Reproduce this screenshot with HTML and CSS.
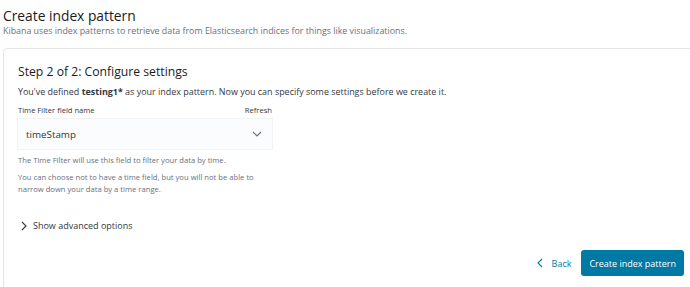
FILE: index.html
```html
<!DOCTYPE html>
<html lang="en">
	<head>
		<meta charset="UTF-8" />
		<title>Create index pattern</title>
		<link rel="stylesheet" href="styles.css">
	</head>
	<body>
		<div class="page-header">
			<h1>Create index pattern</h1>
			<p>
				Kibana uses index patterns to retrieve data from
				Elasticsearch indices for things like visualizations.
			</p>
		</div>

		<div class="panel">
			<h2>Step 2 of 2: Configure settings</h2>
			<p class="intro">
				You've defined <strong>testing1*</strong> as your index
				pattern. Now you can specify some settings before we
				create it.
			</p>

			<div class="form-row">
				<div class="label-row">
					<span>Time Filter field name</span>
					<a class="refresh">Refresh</a>
				</div>
				<div class="select">
					<span>timeStamp</span>
					<svg width="10" height="6" viewBox="0 0 10 6">
						<path d="M1 1l4 4 4-4" fill="none" stroke="#69707d" stroke-width="1.1" />
					</svg>
				</div>
				<div class="help">
					<p>The Time Filter will use this field to filter your data by time.</p>
					<p>
						You can choose not to have a time field, but you will not be able to
						narrow down your data by a time range.
					</p>
				</div>
			</div>

			<div class="advanced">
				<svg width="6" height="10" viewBox="0 0 6 10">
					<path d="M1 1l4 4-4 4" fill="none" stroke="#343741" stroke-width="1.1" />
				</svg>
				<span>Show advanced options</span>
			</div>

			<div class="actions">
				<a class="back">
					<svg width="6" height="10" viewBox="0 0 6 10">
						<path d="M5 1L1 5l4 4" fill="none" stroke="#0079a5" stroke-width="1.1" />
					</svg>
					Back
				</a>
				<button class="create-btn">Create index pattern</button>
			</div>
		</div>
	</body>
</html>
```

FILE: styles.css
```css
* {
	margin: 0;
	padding: 0;
	box-sizing: border-box;
}

body {
	font-family: 'Open Sans', sans-serif;
	background: #fff;
	color: #343741;
	padding: 7px 0 0 3px;
	overflow: hidden;
}

.page-header h1 {
	font-size: 13.8px;
	font-weight: 400;
	line-height: 18px;
	color: #1a1c21;
}

.page-header p {
	font-size: 8.85px;
	line-height: 12px;
	color: #69707d;
}

.panel {
	margin-top: 11px;
	width: 720px;
	height: 260px;
	border: 1px solid #e3e6eb;
	border-radius: 4px;
	padding: 14px 14px;
	box-shadow: 0 1px 2px rgba(0, 0, 0, 0.04);
}

.panel h2 {
	font-size: 12.2px;
	font-weight: 400;
	line-height: 17px;
	color: #1a1c21;
}

.intro {
	margin-top: 5px;
	font-size: 8.95px;
	line-height: 14px;
	color: #343741;
}

.intro strong {
	font-weight: 700;
}

.form-row {
	width: 254px;
	margin-top: 5px;
}

.label-row {
	display: flex;
	justify-content: space-between;
	font-size: 7.6px;
	line-height: 12px;
	color: #343741;
}

.refresh {
	color: #343741;
}

.select {
	margin-top: 3px;
	height: 30px;
	background: #fbfcfd;
	box-shadow: 0 0 0 1px rgba(52, 55, 65, 0.06);
	display: flex;
	align-items: center;
	justify-content: space-between;
	padding: 0 10px 0 8px;
	font-size: 9.8px;
	color: #343741;
}

.help {
	margin-top: 5px;
	font-size: 7.65px;
	line-height: 12px;
	color: #69707d;
}

.help p + p {
	margin-top: 5px;
}

.advanced {
	margin-top: 24px;
	display: flex;
	align-items: center;
	gap: 6px;
	padding-left: 3px;
	font-size: 9px;
	color: #343741;
}

.actions {
	width: 666px;
	margin-top: 18px;
	display: flex;
	justify-content: flex-end;
	align-items: center;
	gap: 0;
}

.back {
	display: flex;
	align-items: center;
	gap: 9px;
	padding: 0 10px;
	font-size: 9px;
	color: #0079a5;
}

.create-btn {
	height: 26px;
	padding: 0 8px;
	background: #0079a5;
	border: none;
	border-radius: 3px;
	color: #fff;
	font-family: 'Open Sans', sans-serif;
	font-size: 9px;
}
```
